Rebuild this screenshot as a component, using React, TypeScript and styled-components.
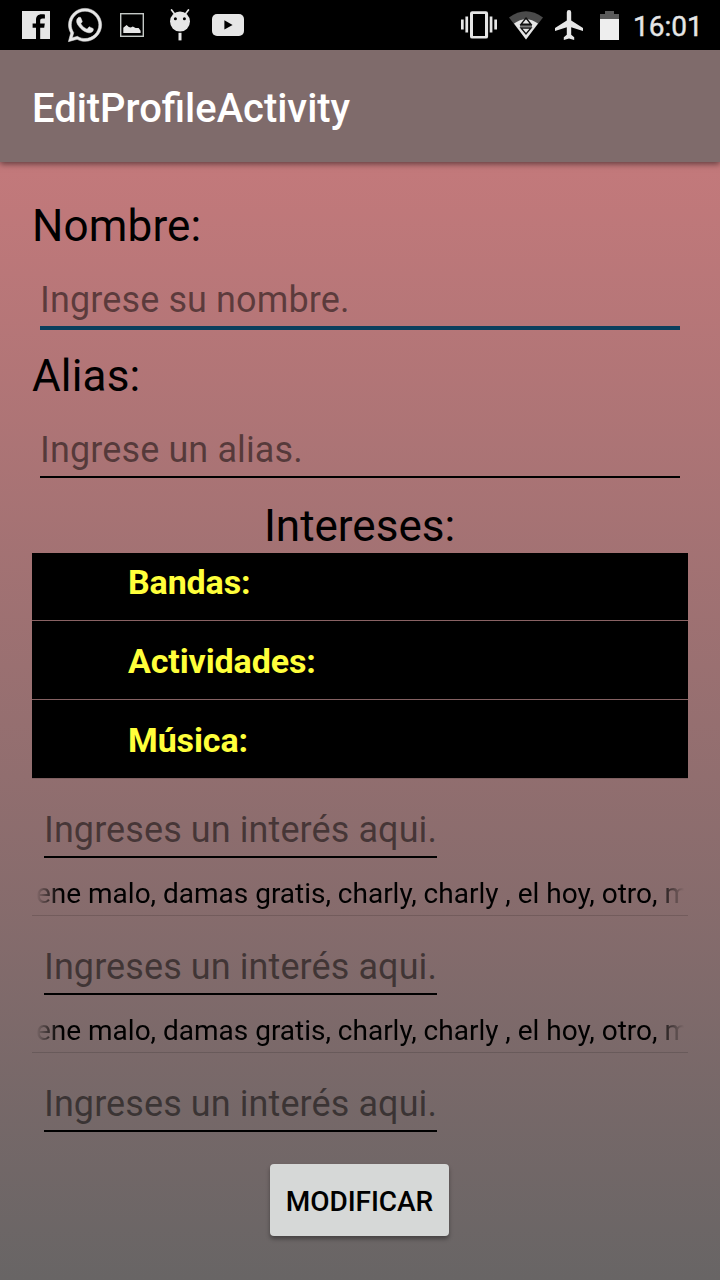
import React from "react";
import styled, { createGlobalStyle } from "styled-components";
import { FaWhatsapp } from "react-icons/fa";

const GlobalStyle = createGlobalStyle`
  * { box-sizing: border-box; }
  body { margin: 0; font-family: Roboto, "Noto Sans", sans-serif; color: #000; }
`;

const Screen = styled.div`
  width: 720px;
  height: 1280px;
  overflow: hidden;
  display: flex;
  flex-direction: column;
  background: linear-gradient(180deg, #c3797b 162px, #686565 1280px);
`;

const StatusBar = styled.header`
  height: 50px;
  flex: none;
  display: flex;
  align-items: center;
  justify-content: space-between;
  padding: 0 17px 0 22px;
  background: #000;
  color: #e6e6e6;
`;

const IconGroup = styled.div<{ $gap: number }>`
  display: flex;
  align-items: center;
  gap: ${(p) => p.$gap}px;
  svg { display: block; flex: none; }
`;

const ChatIcon = styled(FaWhatsapp)`
  overflow: visible;
  stroke: currentColor;
  stroke-width: 7px;
`;

const Clock = styled.span`
  width: 70px;
  font-size: 28px;
  line-height: 34px;
  padding-top: 4px;
  -webkit-text-stroke: 0.4px currentColor;
`;

const AppBar = styled.div`
  height: 112px;
  flex: none;
  display: flex;
  align-items: center;
  padding: 6px 32px 0;
  background: #7f6b6b;
  box-shadow: 0 2px 6px rgba(0, 0, 0, 0.5);
`;

const Title = styled.h1`
  margin: 0;
  font-size: 39.9px;
  line-height: 48px;
  font-weight: 500;
  color: #fff;
`;

const Form = styled.main`
  display: flex;
  flex-direction: column;
  padding: 34px 32px 0;
`;

const Label = styled.div<{ $centered?: boolean }>`
  height: ${(p) => (p.$centered ? 57 : 60)}px;
  padding-right: ${(p) => (p.$centered ? 1 : 0)}px;
  font-size: 44px;
  line-height: 60px;
  letter-spacing: ${(p) => (p.$centered ? 0 : 0.15)}px;
  text-align: ${(p) => (p.$centered ? "center" : "left")};
`;

const Field = styled.div<{ $focused?: boolean }>`
  height: ${(p) => (p.$focused ? 55 : 53)}px;
  margin: 19px 8px ${(p) => (p.$focused ? 16 : 18)}px;
  border-bottom: ${(p) => (p.$focused ? "4px solid #0b3f5d" : "2px solid #000")};
  font-size: 36px;
  line-height: 50px;
  letter-spacing: 0.12px;
  color: rgba(0, 0, 0, 0.5);
  white-space: nowrap;
`;

const InterestField = styled(Field)`
  width: 393px;
  margin: 0 0 0 12px;
  letter-spacing: 0.09px;
`;

const Categories = styled.div`
  height: 226px;
  overflow: hidden;
  display: flex;
  flex-direction: column;
  justify-content: flex-end;
  margin-bottom: 26px;
`;

const Category = styled.div`
  height: 79px;
  flex: none;
  padding: 1px 0 0 96px;
  border-bottom: 1px solid rgba(0, 0, 0, 0.12);
  background: #000;
  background-clip: padding-box;
  color: #ffff3b;
  font-size: 34px;
  font-weight: 700;
  line-height: 78px;
  letter-spacing: -0.12px;
`;

const InterestRow = styled.div`
  height: 58px;
  margin-bottom: 26px;
  padding: 18px 4px 0;
  border-bottom: 1px solid rgba(0, 0, 0, 0.14);
`;

const Marquee = styled.div`
  white-space: nowrap;
  font-size: 28px;
  line-height: 36px;
  letter-spacing: -0.01px;
  mask-image: linear-gradient(90deg, transparent, #000 24px, #000 calc(100% - 28px), transparent);
`;

const SubmitButton = styled.button`
  width: 179px;
  height: 72px;
  align-self: center;
  margin: 32px 1px 0 0;
  padding: 4px 0 0;
  border: 0;
  border-radius: 4px;
  background: #d6d8d7;
  box-shadow: 0 3px 4px rgba(0, 0, 0, 0.35);
  font: 500 28px/34px Roboto, sans-serif;
  letter-spacing: -0.05px;
  color: #000;
`;

const FacebookIcon = () => (
  <svg width="28" height="28" viewBox="0 0 28 28" fill="currentColor">
    <path d="M0 0h28v28H18.2V16.8h4l.6-4.4h-4.6V9.8c0-1.6.8-2.3 2.3-2.3h2.4V3.6c-.8-.2-2-.3-3.2-.3-3.7 0-5.7 2.1-5.7 5.8v3.3h-3.4v4.4H14V28H0z" />
  </svg>
);

const PictureIcon = () => (
  <svg width="24" height="24" viewBox="0 0 24 24">
    <rect x=".7" y=".7" width="22.6" height="22.6" fill="none" stroke="#c4c9c6" strokeWidth="1.4" />
    <path d="M3.3 20v-5.2L6.6 12l2.2 2.1 2 .5 2-1.2 2.8 1.7h3l2 2.7V20z" fill="currentColor" />
  </svg>
);

const RobotIcon = () => (
  <svg width="22" height="32" viewBox="0 0 22 32">
    <path d="M2.6 1l3 4M19.4 1l-3 4" stroke="currentColor" strokeWidth="1.7" strokeLinecap="round" />
    <circle cx="11" cy="12.6" r="10" fill="currentColor" />
    <circle cx="6.4" cy="9.8" r="1.5" fill="#000" />
    <circle cx="15.4" cy="9.8" r="1.5" fill="#000" />
    <path d="M11 23.8v7.6" stroke="currentColor" strokeWidth="3" />
  </svg>
);

const VideoIcon = () => (
  <svg width="32" height="22" viewBox="0 0 32 22">
    <rect width="32" height="22" rx="5" fill="currentColor" />
    <path d="M12.4 6.3v9.2l8.2-4.6z" fill="#000" />
  </svg>
);

const VibrateIcon = () => (
  <svg width="36" height="28" viewBox="0 0 36 28" fill="currentColor">
    <path d="M0 8.5h2.7v10H0zM4.4 5.5h2.7v16H4.4zM28.7 5.5h2.7v16h-2.7zM33.3 8.5H36v10h-2.7z" />
    <path
      fillRule="evenodd"
      d="M11.2.2h13.7a2.2 2.2 0 0 1 2.2 2.2v23a2.2 2.2 0 0 1-2.2 2.2H11.2A2.2 2.2 0 0 1 9 25.4v-23A2.2 2.2 0 0 1 11.2.2zm.8 2.7v22h12v-22z"
    />
  </svg>
);

const WifiIcon = () => (
  <svg width="34" height="29" viewBox="0 0 34 29">
    <path d="M0 6.6Q17-6 34 6.6L17 28.5z" fill="#4a4a4a" />
    <path d="M5 12.5Q17 4 29 12.5L17 28.5z" fill="currentColor" />
    <path d="M17 7l5 6.2H12zM11 14.9h12M12 17h10l-5 6z" fill="none" stroke="#111" strokeWidth="1.4" />
  </svg>
);

const PlaneIcon = () => (
  <svg width="28" height="30" viewBox="0 0 28 30" fill="currentColor">
    <path d="M28 21v-3L16.2 10.6V2.2a2.2 2.2 0 0 0-4.4 0v8.4L0 18v3l11.8-3.7v7.5l-3 2.5V30l5.2-1.4 5.2 1.4v-2.7l-3-2.5v-7.5z" />
  </svg>
);

const BatteryIcon = () => (
  <svg width="19" height="29" viewBox="0 0 19 29">
    <path d="M0 3h5V0h9v3h5v5H0z" fill="#5a5a5a" />
    <path d="M0 8h19v21H0z" fill="#eee" />
  </svg>
);

const categories = ["Bandas:", "Actividades:", "Música:"];
const interests = "ene malo, damas gratis, charly, charly , el hoy, otro, m";

const InterestEntry = () => <InterestField>Ingreses un interés aqui.</InterestField>;

export default function App() {
  return (
    <Screen>
      <GlobalStyle />
      <StatusBar>
        <IconGroup $gap={25}>
          <IconGroup $gap={16}>
            <FacebookIcon />
            <ChatIcon size={38} />
            <PictureIcon />
          </IconGroup>
          <IconGroup $gap={21}>
            <RobotIcon />
            <VideoIcon />
          </IconGroup>
        </IconGroup>
        <IconGroup $gap={17}>
          <IconGroup $gap={12}>
            <VibrateIcon />
            <WifiIcon />
            <PlaneIcon />
          </IconGroup>
          <IconGroup $gap={14}>
            <BatteryIcon />
            <Clock>16:01</Clock>
          </IconGroup>
        </IconGroup>
      </StatusBar>
      <AppBar>
        <Title>EditProfileActivity</Title>
      </AppBar>
      <Form>
        <Label>Nombre:</Label>
        <Field $focused>Ingrese su nombre.</Field>
        <Label>Alias:</Label>
        <Field>Ingrese un alias.</Field>
        <Label $centered>Intereses:</Label>
        <Categories>
          {categories.map((name) => (
            <Category key={name}>{name}</Category>
          ))}
        </Categories>
        {[0, 1].map((n) => (
          <React.Fragment key={n}>
            <InterestEntry />
            <InterestRow>
              <Marquee>{interests}</Marquee>
            </InterestRow>
          </React.Fragment>
        ))}
        <InterestEntry />
        <SubmitButton>MODIFICAR</SubmitButton>
      </Form>
    </Screen>
  );
}
